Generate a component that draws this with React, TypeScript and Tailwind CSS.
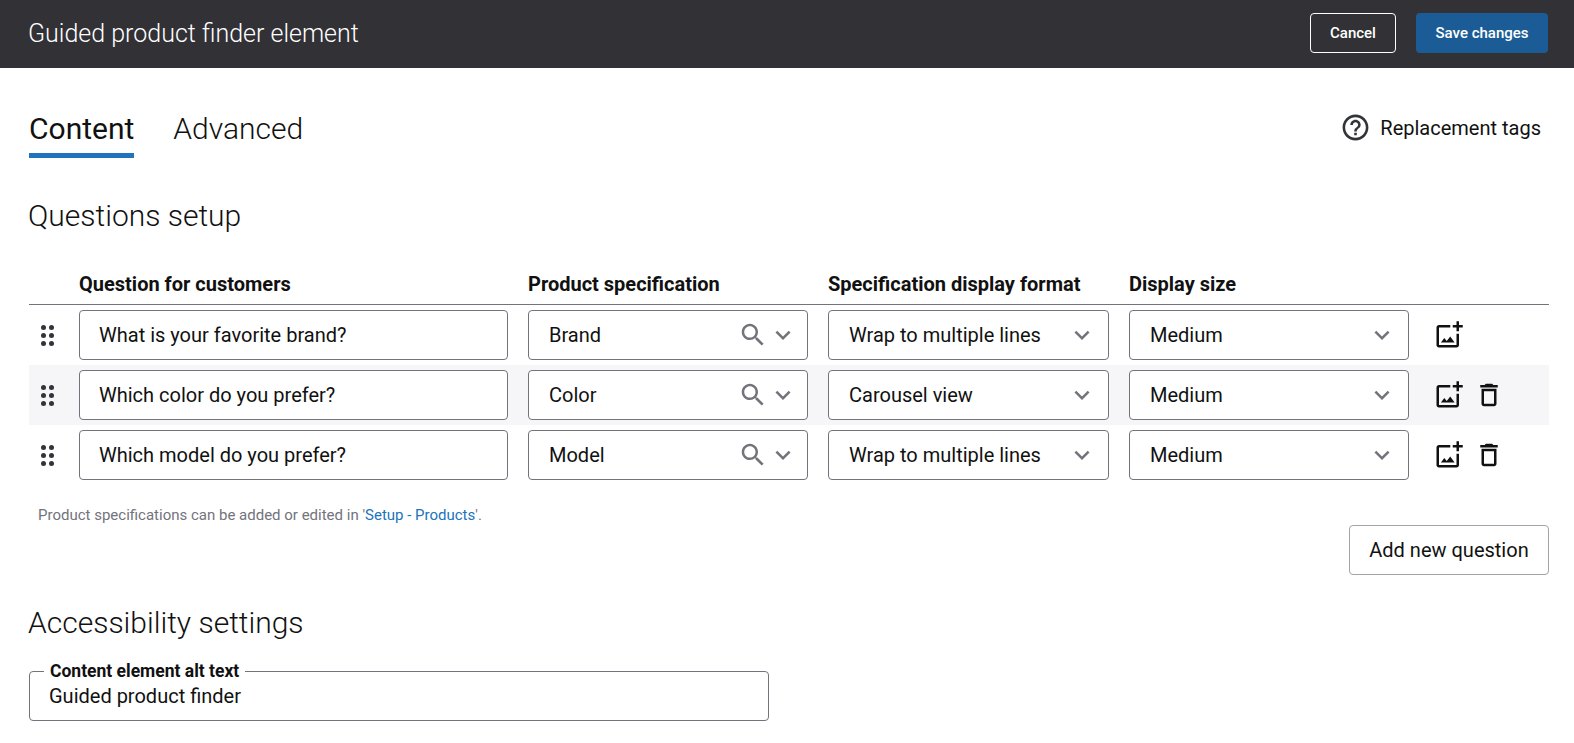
const rows = [
  { question: 'What is your favorite brand?', spec: 'Brand', format: 'Wrap to multiple lines', removable: false },
  { question: 'Which color do you prefer?', spec: 'Color', format: 'Carousel view', removable: true },
  { question: 'Which model do you prefer?', spec: 'Model', format: 'Wrap to multiple lines', removable: true }
];

function Icon({ d, className }: { d: string; className: string }) {
  return (
    <svg viewBox="0 0 24 24" fill="currentColor" className={className}>
      <path d={d} />
    </svg>
  );
}

const searchPath = 'M15.5 14h-.79l-.28-.27C15.41 12.59 16 11.11 16 9.5 16 5.91 13.09 3 9.5 3S3 5.91 3 9.5 5.91 16 9.5 16c1.61 0 3.09-.59 4.23-1.57l.27.28v.79l5 4.99L20.49 19l-4.99-5zm-6 0C7.01 14 5 11.99 5 9.5S7.01 5 9.5 5 14 7.01 14 9.5 11.99 14 9.5 14z';
const chevronPath = 'M16.59 8.59L12 13.17 7.41 8.59 6 10l6 6 6-6z';
const helpPath = 'M11 18h2v-2h-2v2zm1-16C6.48 2 2 6.48 2 12s4.48 10 10 10 10-4.48 10-10S17.52 2 12 2zm0 18c-4.41 0-8-3.59-8-8s3.59-8 8-8 8 3.59 8 8-3.59 8-8 8zm0-14c-2.21 0-4 1.79-4 4h2c0-1.1.9-2 2-2s2 .9 2 2c0 2-3 1.75-3 5h2c0-2.25 3-2.5 3-5 0-2.21-1.79-4-4-4z';
const addPhotoPath = 'M18 20H4V6h9V4H4c-1.1 0-2 .9-2 2v14c0 1.1.9 2 2 2h14c1.1 0 2-.9 2-2v-9h-2v9zm-7.79-3.17l-1.96-2.36L5.5 18h11l-3.54-4.71zM20 4V1h-2v3h-3c.01.01 0 2 0 2h3v2.99c.01.01 2 0 2 0V6h3V4h-3z';
const trashPath = 'M6 19c0 1.1.9 2 2 2h8c1.1 0 2-.9 2-2V7H6v12zM8 9h8v10H8V9zm7.5-5l-1-1h-5l-1 1H5v2h14V4z';

function Grip() {
  return (
    <div className="grid w-[13px] grid-cols-2 gap-x-[3px] gap-y-[3px]">
      {[0, 1, 2, 3, 4, 5].map(i => (
        <span key={i} className="h-[5px] w-[5px] rounded-full bg-[#33333a]" />
      ))}
    </div>
  );
}

function Select({ label, search, width }: { label: string; search?: boolean; width: string }) {
  return (
    <div className={`ml-[20px] flex h-[50px] shrink-0 items-center rounded-[4px] border border-[#73737b] bg-white pl-[20px] ${width} ${search ? 'pr-[9px]' : 'pr-[11px]'}`}>
      <span className="flex-1 text-[20px] text-[#111]">{label}</span>
      {search && <Icon d={searchPath} className="h-[30px] w-[30px] text-[#73737b]" />}
      <Icon d={chevronPath} className="h-[30px] w-[30px] text-[#73737b]" />
    </div>
  );
}

export default function App() {
  return (
    <div className="min-h-[743px] overflow-hidden bg-white font-['Roboto',sans-serif] text-[#111]">
      {/* Top bar */}
      <header className="flex h-[68px] items-center justify-between bg-[#313136] pl-[28px] pr-[26px]">
        <h1 className="text-[25px] font-light text-white">Guided product finder element</h1>
        <div className="mb-[2px] flex gap-[20px]">
          <button className="h-[40px] w-[86px] rounded-[4px] border border-white text-[15px] font-medium text-white">Cancel</button>
          <button className="h-[40px] w-[132px] rounded-[4px] bg-[#1c5c96] text-[15px] font-medium text-white">Save changes</button>
        </div>
      </header>

      <main className="pl-[29px] pr-[25px]">
        {/* Tabs */}
        <div className="flex items-start justify-between pt-[38px]">
          <nav className="flex gap-[39px]">
            <div className="flex h-[52px] flex-col justify-between">
              <span className="pt-[1px] text-[30px] leading-[44px]">Content</span>
              <span className="h-[5px] bg-[#2173bd]" />
            </div>
            <span className="pt-[1px] text-[30px] font-light leading-[44px]">Advanced</span>
          </nav>
          <div className="flex items-center gap-[9px] pr-[8px] pt-[6px]">
            <Icon d={helpPath} className="h-[31px] w-[31px] text-[#33333a]" />
            <span className="text-[20px]">Replacement tags</span>
          </div>
        </div>

        <h2 className="mt-[38px] -ml-[1px] text-[30px] font-light leading-[40px]">Questions setup</h2>

        {/* Question table */}
        <div className="mt-[32px] flex h-[37px] items-start border-b border-[#73737b] pl-[50px] pt-[1px] text-[20px] font-bold leading-[30px]">
          <span className="w-[449px]">Question for customers</span>
          <span className="w-[300px]">Product specification</span>
          <span className="w-[301px]">Specification display format</span>
          <span>Display size</span>
        </div>
        {rows.map((row, i) => (
          <div key={row.question} className={`flex h-[60px] items-center ${i === 1 ? 'bg-[#f6f6f8]' : ''}`}>
            <div className="flex w-[50px] justify-start pl-[12px]">
              <Grip />
            </div>
            <div className="flex h-[50px] w-[429px] items-center rounded-[4px] border border-[#73737b] bg-white pl-[19px] text-[20px]">
              {row.question}
            </div>
            <Select label={row.spec} width="w-[280px]" search />
            <Select label={row.format} width="w-[281px]" />
            <Select label="Medium" width="w-[280px]" />
            <div className="ml-[25px] flex gap-[10px] text-[#111]">
              <Icon d={addPhotoPath} className="h-[30px] w-[30px]" />
              {row.removable && <Icon d={trashPath} className="h-[30px] w-[30px]" />}
            </div>
          </div>
        ))}

        <p className="mt-[21px] pl-[9px] text-[15px] leading-[19px] text-[#73737b]">
          Product specifications can be added or edited in &#39;<span className="text-[#2173bd]">Setup - Products</span>&#39;.
        </p>
        <div className="flex justify-end">
          <button className="h-[50px] w-[200px] rounded-[4px] border border-[#a3a3aa] bg-white text-[20px]">Add new question</button>
        </div>

        {/* Accessibility */}
        <h2 className="mt-[28px] -ml-[1px] text-[30px] font-light leading-[40px]">Accessibility settings</h2>
        <fieldset className="mt-[19px] h-[59px] w-[740px] rounded-[4px] border border-[#73737b] pl-[15px]">
          <legend className="-ml-[1px] px-[6px] text-[17.5px] font-bold leading-[18px]">Content element alt text</legend>
          <div className="pl-[4px] pt-[1px] text-[20px] leading-[30px]">Guided product finder</div>
        </fieldset>
      </main>
    </div>
  );
}
